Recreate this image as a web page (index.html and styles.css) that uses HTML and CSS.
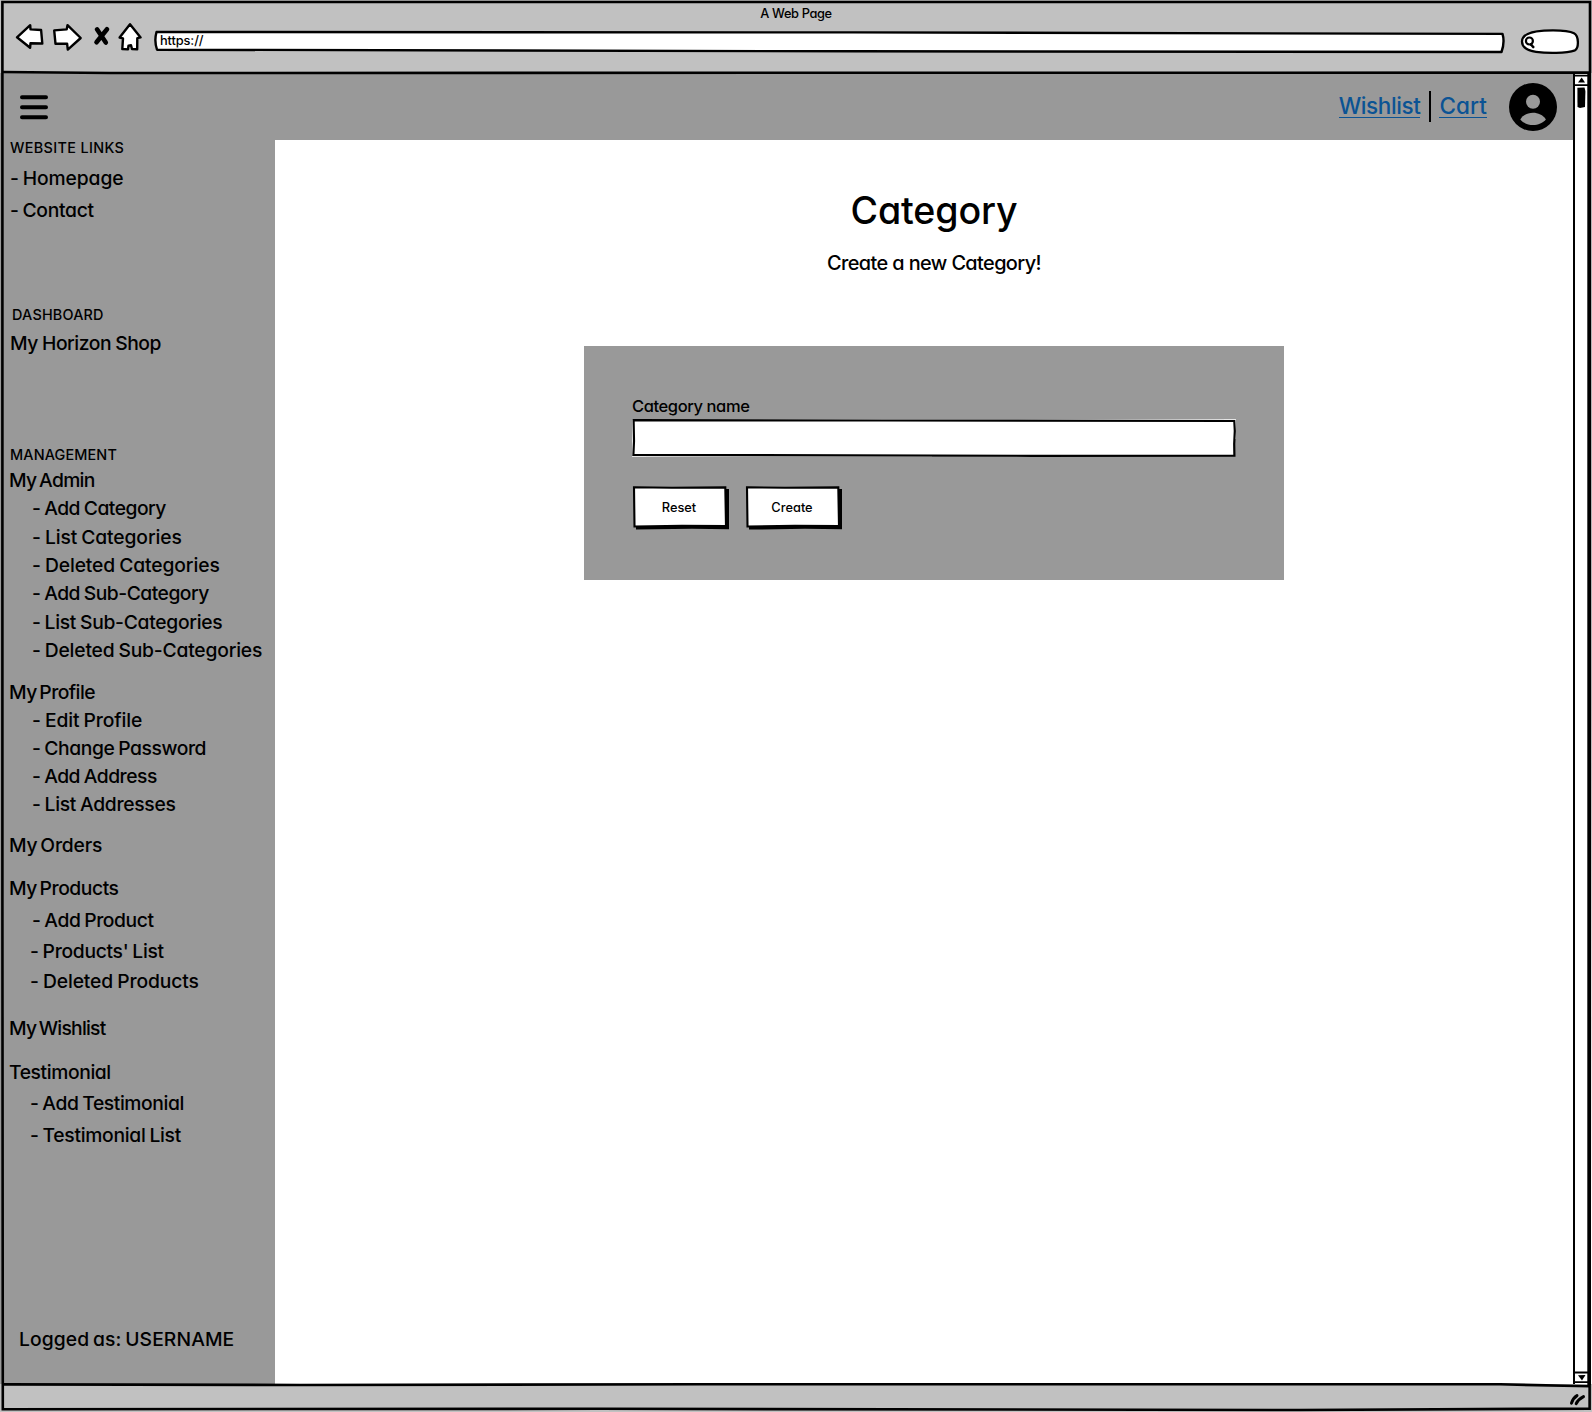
FILE: index.html
```html
<!DOCTYPE html>
<html lang="en">
<head>
<meta charset="utf-8">
<title>A Web Page</title>
<link rel="stylesheet" href="styles.css">
</head>
<body>
<div class="window">
  <header class="chrome">
    <div class="chrome-title">A Web Page</div>
    <div class="toolbar">
      <svg class="nav-icons" width="128" height="32" viewBox="0 0 128 32">
        <g fill="#fff" stroke="#000" stroke-width="2.4" stroke-linejoin="round">
          <path d="M2 15.3 15.2 3.2 15.5 7.4 26.1 8 27.3 21.5 15.5 21.2 15.1 25.8Z"/>
          <path d="M39.2 8.4 51.7 7.4 52.5 3.2 65.7 16 52.8 27.6 52.1 21.6 40.5 21.8Z"/>
          <path d="M115 2.2 125.6 15.4 122.3 16.2 122.2 27.2 117 27 116 23.3 113.5 23.6 113 27.4 107.3 27 108 16.4 104.6 15.6Z"/>
        </g>
        <path d="M82 7.3 90.8 20.5M92 7.3 81.5 20.3" stroke="#000" stroke-width="4.6" stroke-linecap="round"/>
      </svg>
      <div class="url">
        <svg class="sketch" width="1352" height="24" viewBox="0 0 1352 24">
          <path d="M2.5 2 700 2.4 1348.5 3.9Q1351 12 1347.5 22L700 21.3 3 19.7Q0 11 2.5 2Z" fill="#fff" stroke="#000" stroke-width="2.4" stroke-linejoin="round"/>
        </svg>
        <span class="url-text">https://</span>
      </div>
      <svg class="search" width="60" height="26" viewBox="0 0 60 26">
        <path d="M2 13.5C2 7 9 3.5 24 2.6 38 2 50 3.2 54 5.3 59 8 59 20 55 22.3 46 25.5 27 25.3 16 23.8 7 22.5 2 19.5 2 13.5Z" fill="#fff" stroke="#000" stroke-width="2.3"/>
        <circle cx="9.4" cy="13" r="3.5" fill="none" stroke="#000" stroke-width="2.2"/>
        <path d="M11 16.5 13.2 19" stroke="#000" stroke-width="2.6" stroke-linecap="round"/>
      </svg>
    </div>
  </header>

  <div class="viewport">
    <div class="page">
      <div class="topbar">
        <svg width="28" height="25" viewBox="0 0 28 25"><path d="M2 2.2H26M2 12.2H26M2 22.2H26" stroke="#000" stroke-width="4" stroke-linecap="round"/></svg>
        <div class="account">
          <a class="link">Wishlist</a>
          <span class="divider"></span>
          <a class="link cart">Cart</a>
          <svg class="avatar" width="48" height="48" viewBox="0 0 48 48"><circle cx="24" cy="24" r="24"/><circle cx="24" cy="18.8" r="7" fill="#999"/><path d="M11.3 36.5C14 32 19 29.8 24 29.8S34 32 36.9 36.5C34 40 29 42 24 42S14 40 11.3 36.5Z" fill="#999"/></svg>
        </div>
      </div>
      <div class="body">
        <nav class="sidebar">
          <h2 class="group links">WEBSITE LINKS</h2>
          <ul class="site">
            <li class="wide">- Homepage</li>
            <li>- Contact</li>
          </ul>
          <h2 class="group dashboard">DASHBOARD</h2>
          <div class="item shop">My Horizon Shop</div>
          <h2 class="group management">MANAGEMENT</h2>
          <div class="item admin">My Admin</div>
          <ul class="sub admin-list">
            <li class="tight">- Add Category</li>
            <li class="wide">- List Categories</li>
            <li class="wide">- Deleted Categories</li>
            <li class="tight">- Add Sub-Category</li>
            <li>- List Sub-Categories</li>
            <li class="medium">- Deleted Sub-Categories</li>
          </ul>
          <div class="item profile">My Profile</div>
          <ul class="sub">
            <li class="wide">- Edit Profile</li>
            <li class="snug">- Change Password</li>
            <li class="tight">- Add Address</li>
            <li>- List Addresses</li>
          </ul>
          <div class="item orders">My Orders</div>
          <div class="item products">My Products</div>
          <ul class="sub product-list">
            <li class="snug first">- Add Product</li>
            <li>- Products' List</li>
            <li class="wide">- Deleted Products</li>
          </ul>
          <div class="item wishlist">My Wishlist</div>
          <div class="item testimonial">Testimonial</div>
          <ul class="sub testimonial-list">
            <li class="snug">- Add Testimonial</li>
            <li>- Testimonial List</li>
          </ul>
          <div class="logged">Logged as: USERNAME</div>
        </nav>
        <main class="main">
          <h1 class="heading">Category</h1>
          <p class="lead">Create a new Category!</p>
          <form class="card">
            <label class="label" for="name">Category name</label>
            <div class="field">
              <svg class="sketch" width="604" height="38" viewBox="0 0 604 38">
                <path d="M0 .3H604V20H602V2L300 1.6V37.4L0 37.7Z" fill="#fff"/>
                <path d="M1.6 1.2 250 1.5 602.3 2 602.8 12 602.2 25 602.4 36.7 400 36.8 1.4 35.8 2 22Z" fill="#fff" stroke="#000" stroke-width="2.2"/>
              </svg>
              <input class="input" id="name" type="text">
            </div>
            <div class="actions">
              <button class="button" type="button">
                <svg class="sketch" width="98" height="44" viewBox="0 0 98 44"><path d="M4 3H97V43.3L60 42.8 4 43.6Z"/><path d="M2 1.2 40 1.8 93.3 1.4 94 40 50 39.7 2.5 40.5Z" fill="#fff" stroke="#000" stroke-width="2.1"/></svg>
                <span class="caption">Reset</span>
              </button>
              <button class="button" type="button">
                <svg class="sketch" width="98" height="44" viewBox="0 0 98 44"><path d="M4 3H97V43.3L60 42.8 4 43.6Z"/><path d="M2 1.2 40 1.8 93.3 1.4 94 40 50 39.7 2.5 40.5Z" fill="#fff" stroke="#000" stroke-width="2.1"/></svg>
                <span class="caption">Create</span>
              </button>
            </div>
          </form>
        </main>
      </div>
    </div>
    <div class="scrollbar">
      <svg width="16" height="36" viewBox="0 0 16 36"><path d="M0 2.6H14M0 12.2H14" stroke="#000" stroke-width="1.8"/><path d="M3 9.5 6.7 4.6 10 9.5Z"/><path d="M2.4 14.8 9.5 14.5 10.4 18 10 34 5 35 2.5 34Z"/></svg>
      <svg width="16" height="13" viewBox="0 0 16 13"><path d="M0 1.5H14M0 11.2H14" stroke="#000" stroke-width="1.8"/><path d="M3 4.2 10.5 4 7 9.6Z"/></svg>
    </div>
  </div>

  <footer class="status">
    <svg width="18" height="16" viewBox="0 0 18 16"><path d="M3.5 12.2Q5 7 9 4.6M8.2 12.6Q10.5 8 15.5 5.6" fill="none" stroke="#000" stroke-width="3" stroke-linecap="round"/></svg>
  </footer>

  <svg class="outline" width="1592" height="1412" viewBox="0 0 1592 1412">
    <path d="M3 1387 1480 1386.5 1588 1388V1384H3Z" fill="#c1c1c1"/>
    <path d="M1587.3 74H1591V1385H1587.3Z"/>
    <g fill="none" stroke="#000" stroke-width="2.6">
      <path d="M2.4 2H1590V700L1589.6 1408.6 1300 1410 600 1408.8 2.8 1409.2 2.4 900Z"/>
      <path d="M3 72 110 73 1590 72.6"/>
      <path d="M3 1384.4 300 1385 700 1384.3 1500 1384.3 1590 1386.3"/>
    </g>
  </svg>
</div>
</body>
</html>
```
FILE: styles.css
```css
* { box-sizing: border-box; }
body {
  margin: 0;
  color: #000;
  background: #999;
  font-family: Inter, "Liberation Sans", sans-serif;
  font-weight: 500;
  font-feature-settings: "cv11";
}
h1, h2, p, ul { margin: 0; padding: 0; font-weight: inherit; list-style: none; }
.window {
  position: relative;
  display: flex;
  flex-direction: column;
  width: 1592px;
  height: 1412px;
  overflow: hidden;
}
.outline { position: absolute; inset: 0; pointer-events: none; }
.sketch { position: absolute; left: 0; top: 0; }

/* Browser chrome */
.chrome { height: 73px; padding: 5px 12px 0 15px; background: #c1c1c1; }
.chrome-title {
  height: 17px;
  line-height: 17px;
  text-align: center;
  font-size: 12.8px;
  letter-spacing: -.36px;
  padding-right: 3px;
}
.toolbar { display: flex; align-items: flex-start; height: 32px; }
.url { position: relative; width: 1352px; height: 24px; margin: 8px 14px 0 11px; }
.nav-icons { flex: none; }
.url-text {
  position: relative;
  display: block;
  padding-left: 6px;
  line-height: 21px;
  font-size: 12.8px;
  letter-spacing: -.1px;
}
.search { flex: none; margin-top: 6px; }

/* Page */
.viewport { display: flex; height: 1311px; }
.page { flex: 1; display: flex; flex-direction: column; }
.scrollbar {
  display: flex;
  flex-direction: column;
  justify-content: space-between;
  width: 19px;
  border-left: 2px solid #000;
  background: #fff;
}
.topbar {
  display: flex;
  justify-content: space-between;
  height: 67px;
  padding: 22px 16px 0 20px;
  background: #999;
}
.account { display: flex; align-items: flex-start; margin-top: -12px; }
.link {
  margin-top: 8px;
  height: 27px;
  line-height: 30px;
  border-bottom: 1.5px solid #0b5394;
  color: #0b5394;
  font-size: 22.5px;
  font-weight: 500;
  letter-spacing: -.4px;
}
.cart { letter-spacing: .1px; }
.divider { width: 2px; height: 31px; margin: 8px 8px 0 9px; background: #000; }
.avatar { margin-left: 22px; }

.body { flex: 1; display: flex; }
.sidebar {
  display: flex;
  flex-direction: column;
  width: 275px;
  padding: 1px 0 31px 9px;
  background: #999;
  font-size: 19.3px;
  line-height: 28px;
  letter-spacing: -.3px;
  white-space: nowrap;
}
.group { padding-left: 1px; font-size: 14.4px; font-weight: 450; line-height: 14px; letter-spacing: .2px; }
.links { letter-spacing: .35px; }
.site { margin: 6.5px 0 0 1px; line-height: 32px; word-spacing: -1px; }
.wide { letter-spacing: -.12px; }
.medium { letter-spacing: -.2px; }
.snug { letter-spacing: -.42px; }
.tight { letter-spacing: -.5px; }
.item { letter-spacing: -.45px; word-spacing: -2px; }
.dashboard { margin-top: 82.5px; padding-left: 3px; }
.shop { margin-top: 7px; padding-left: 1px; word-spacing: -.6px; }
.management { margin-top: 91px; letter-spacing: .15px; }
.admin { margin-top: 4px; letter-spacing: -.65px; }
.sub { padding-left: 23px; word-spacing: -.9px; }
.admin-list { padding-top: .2px; line-height: 28.4px; }
.profile { margin-top: 13.4px; letter-spacing: -.55px; }
.orders { margin-top: 13px; letter-spacing: -.2px; }
.products { margin-top: 15px; }
.product-list { margin-top: 2.75px; padding-left: 21px; line-height: 30.5px; }
.product-list .first { padding-left: 2px; margin: .3px 0 -.3px; line-height: 31px; }
.wishlist { margin-top: 17.25px; letter-spacing: -.75px; }
.testimonial { margin-top: 15.5px; letter-spacing: -.4px; }
.testimonial-list { margin-top: 1.5px; padding-left: 21px; line-height: 32px; }
.logged { margin-top: auto; padding-left: 10px; letter-spacing: .1px; word-spacing: -1.5px; }

.main {
  flex: 1;
  display: flex;
  flex-direction: column;
  align-items: center;
  padding: 47.5px 0 0 20px;
  background: #fff;
}
.heading { font-size: 37.6px; line-height: 46px; letter-spacing: -.15px; }
.lead { margin-top: 15.3px; font-size: 19.9px; line-height: 28px; letter-spacing: -.6px; }
.card {
  width: 700px;
  height: 234px;
  margin-top: 69.2px;
  padding: 50px 48px;
  background: #999;
}
.label { display: block; font-size: 16.5px; line-height: 20px; letter-spacing: -.4px; }
.field { position: relative; height: 38px; margin-top: 3px; }
.input {
  position: relative;
  width: 100%;
  height: 100%;
  padding: 0 10px;
  border: 0;
  outline: 0;
  background: none;
  font: inherit;
}
.actions { display: flex; gap: 15px; margin-top: 29px; }
.button {
  position: relative;
  width: 98px;
  height: 44px;
  padding: 0 4px 1px 0;
  border: 0;
  background: none;
  color: inherit;
  font: inherit;
  font-feature-settings: inherit;
  font-size: 12.8px;
}
.caption { position: relative; }

.status { display: flex; justify-content: flex-end; flex: 1; padding: 7px 6px 0 0; background: #c1c1c1; }
```
